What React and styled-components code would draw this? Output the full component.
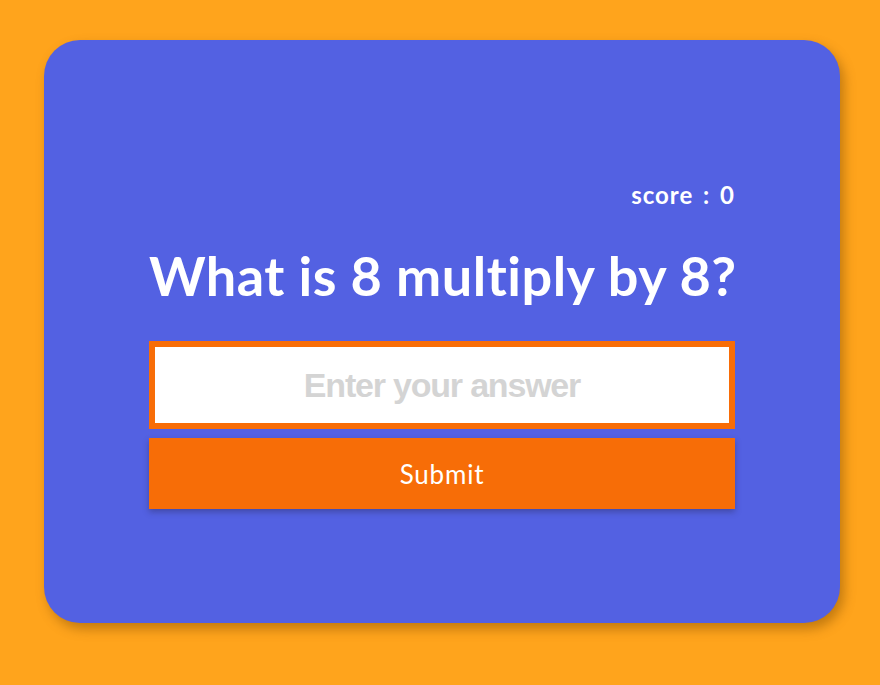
import React, { useState } from 'react';
import styled, { createGlobalStyle } from 'styled-components';

const GlobalStyle = createGlobalStyle`
	html, body {
		margin: 0;
		padding: 0;
		background: #ffa41c;
	}
	* {
		box-sizing: border-box;
	}
`;

const Page = styled.main`
	width: 880px;
	height: 685px;
	padding: 40px 40px 0 44px;
	font-family: 'Comic Sans MS', 'Lato', 'DejaVu Sans', sans-serif;
`;

const Card = styled.section`
	height: 583px;
	background: #5361e2;
	border-radius: 36px;
	box-shadow: 4px 6px 12px rgba(120, 70, 0, 0.45);
	padding: 141px 105px 0;
	display: flex;
	flex-direction: column;
`;

const Score = styled.div`
	align-self: flex-end;
	color: #fff;
	font-weight: 700;
	font-size: 24px;
	line-height: 28px;
	letter-spacing: 1px;
	word-spacing: 3px;
`;

const Question = styled.h1`
	margin: 35px 0 33px;
	color: #fff;
	font-weight: 700;
	font-size: 54px;
	line-height: 64px;
	letter-spacing: 0.5px;
	text-align: center;
	white-space: nowrap;
`;

const AnswerInput = styled.input`
	width: 100%;
	height: 88px;
	border: 6px solid #f86d07;
	background: #fff;
	text-align: center;
	font-family: 'Liberation Sans Narrow', 'Liberation Sans', Arial, sans-serif;
	font-weight: 700;
	font-size: 34px;
	letter-spacing: -1.2px;
	color: #333;
	outline: none;

	&::placeholder {
		color: #d4d4d4;
	}
`;

const SubmitButton = styled.button`
	margin-top: 9px;
	width: 100%;
	height: 71px;
	border: none;
	background: #f76d07;
	color: #fff;
	font-family: inherit;
	font-size: 26px;
	letter-spacing: 0.8px;
	box-shadow: 0 3px 6px rgba(40, 40, 80, 0.4);
	cursor: pointer;
`;

export default function App() {
	const [answer, setAnswer] = useState('');
	const [score] = useState(0);

	return (
		<>
			<GlobalStyle />
			<Page>
				<Card>
					<Score>score : {score}</Score>
					<Question>What is 8 multiply by 8?</Question>
					<AnswerInput
						placeholder="Enter your answer"
						value={answer}
						onChange={(e) => setAnswer(e.target.value)}
					/>
					<SubmitButton>Submit</SubmitButton>
				</Card>
			</Page>
		</>
	);
}
